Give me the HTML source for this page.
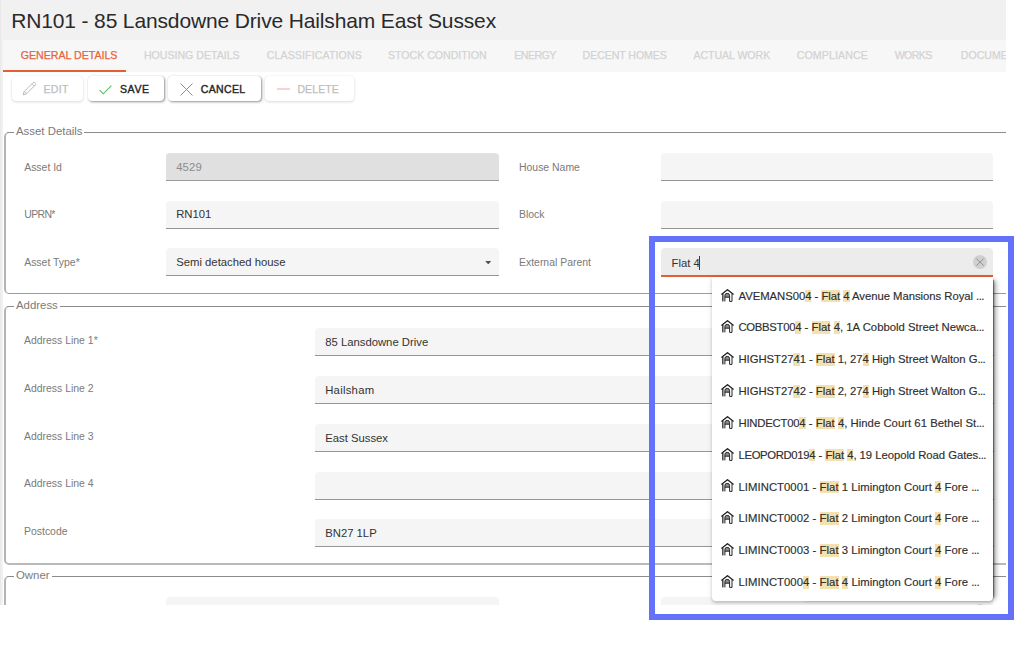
<!DOCTYPE html>
<html lang="en">
<head>
<meta charset="utf-8">
<title>RN101 - 85 Lansdowne Drive Hailsham East Sussex</title>
<style>
*{box-sizing:border-box;margin:0;padding:0}
html,body{width:1033px;height:645px;background:#fff;overflow:hidden}
body{font-family:"Liberation Sans",sans-serif;font-size:11.3px;color:#333;position:relative}
.abs,#page *{position:absolute;white-space:nowrap}
#page{position:absolute;left:0;top:0;width:1005.5px;height:605px;overflow:hidden;background:#f1f1f1}
#edge{left:0;top:0;width:1px;height:605px;background:#e9e9e9}
#title{left:11.2px;top:7.6px;font-size:21px;letter-spacing:-.14px;line-height:26px;color:#2a2a2a}
#tabbar{left:3px;top:40px;width:1010px;height:32px;background:#f7f7f7}
#tabbar span{top:0;line-height:30px;font-size:10.6px;letter-spacing:0;color:#d3d3d3;font-weight:400;-webkit-text-stroke:.25px}
#tabbar span.on{color:#e8633b}
#slider{left:0;top:30px;width:122.8px;height:2px;background:#e55e31}
#content{left:3px;top:72px;width:1010px;height:540px;background:#fff}
.btn{top:76px;height:25px;background:#fff;border-radius:4px;box-shadow:1px 1px 2.5px rgba(0,0,0,.42),0 0 1px rgba(0,0,0,.18)}
.btn.dis{box-shadow:0 1px 3px rgba(0,0,0,.14),0 0 1px rgba(0,0,0,.10)}
.btn b{top:.6px;line-height:25px;font-size:10.5px;letter-spacing:.7px;font-weight:400;-webkit-text-stroke:.4px;color:#262626}
.btn.dis b{color:#bebebe;-webkit-text-stroke:.25px}
.btn svg{overflow:visible}
.fs{left:4px;width:1100px;border-style:solid;border-width:1px 0 2px 2px;border-color:#8c8c8c #b4b4b4 #bababa #b4b4b4;border-radius:5px}
.fs i{font-style:normal;top:-8px;left:8px;padding:0 2px;background:#fff;line-height:13px;font-size:11.4px;color:#7b7b7b}
.lb{color:#7a7a7a;font-size:10.45px;line-height:14px}
.in{height:28px;background:#f5f5f5;border-bottom:1px solid #969696;border-radius:4px 4px 0 0}
.in.dis{background:#e0e0e0;border-bottom-color:#9a9a9a}
.in.dis u{color:#8b8b8b}
.in.foc{background:#ececec;border-bottom:2px solid #e55e31}
.in u{text-decoration:none;left:10.2px;top:6.8px;line-height:14px;font-size:11.3px;color:#333}
#dd{position:absolute;left:712px;top:277px;width:281px;height:324px;background:#fff;border-radius:0 0 4px 4px;box-shadow:0 2px 3px rgba(0,0,0,.17),0 1px 6px rgba(0,0,0,.10)}
#ddsh{position:absolute;left:800px;top:280px;width:193px;height:320px;border-radius:0 0 5px 0;box-shadow:1.5px 0 1.5px -.5px rgba(0,0,0,.5),4px 0 5px -1px rgba(0,0,0,.32)}
#dd div{position:absolute;left:0;width:281.5px;height:32px;white-space:nowrap}
#dd svg{position:absolute;left:9px;top:9.5px}
#dd p{position:absolute;left:26.5px;top:10.6px;line-height:13px;font-size:11.3px;color:#2e2e2e;-webkit-text-stroke:.15px;white-space:nowrap}
#dd s{text-decoration:none;letter-spacing:-.55px}
#dd em{font-style:normal;background:#f4e1b1;padding:0 0 .5px}
#hl{position:absolute;left:649px;top:236px;width:365px;height:384px;border:6px solid #6472f9}
</style>
</head>
<body>
<div id="page">
  <div id="edge"></div>
  <div id="title">RN101 - 85 Lansdowne Drive Hailsham East Sussex</div>
  <div id="tabbar">
    <span class="on" id="t0" style="left:17.8px">GENERAL DETAILS</span>
    <span id="t1" style="left:140.9px">HOUSING DETAILS</span>
    <span id="t2" style="left:263.7px;letter-spacing:0.12px">CLASSIFICATIONS</span>
    <span id="t3" style="left:384.9px">STOCK CONDITION</span>
    <span id="t4" style="left:511.2px;letter-spacing:-0.5px">ENERGY</span>
    <span id="t5" style="left:579.6px;letter-spacing:-0.08px">DECENT HOMES</span>
    <span id="t6" style="left:690.5px;letter-spacing:-0.06px">ACTUAL WORK</span>
    <span id="t7" style="left:793.7px;letter-spacing:0.13px">COMPLIANCE</span>
    <span id="t8" style="left:891.7px;letter-spacing:-0.58px">WORKS</span>
    <span id="t9" style="left:957.8px">DOCUMENTS</span>
    <div id="slider"></div>
  </div>
  <div id="content"></div>

  <!-- buttons -->
  <div class="btn dis" style="left:12px;width:71px">
    <svg style="left:10px;top:5px" width="15" height="15" viewBox="0 0 15 15"><path d="M1.2 13.8l.9-3.2L11.1 1.6a1.1 1.1 0 0 1 1.5 0l.8.8a1.1 1.1 0 0 1 0 1.5L4.4 12.9z M2.2 10.4l2.4 2.4M10 2.8l2.3 2.3" fill="none" stroke="#b2b2b2" stroke-width=".9"/></svg>
    <b id="b0" style="left:31.5px;letter-spacing:.3px">EDIT</b>
  </div>
  <div class="btn" style="left:88px;width:76px">
    <svg style="left:11px;top:8.5px" width="13" height="10" viewBox="0 0 13 10"><path d="M.6 5.2l3.6 3.6L12.4.7" fill="none" stroke="#5cb860" stroke-width="1.05"/></svg>
    <b id="b1" style="left:31.9px;letter-spacing:.65px">SAVE</b>
  </div>
  <div class="btn" style="left:168px;width:93px">
    <svg style="left:11.8px;top:6.5px" width="13" height="13" viewBox="0 0 13 13"><path d="M.5.5l12 12M12.5.5l-12 12" fill="none" stroke="#e36a6a" stroke-width="1"/></svg>
    <b id="b2" style="left:32.7px;letter-spacing:.36px">CANCEL</b>
  </div>
  <div class="btn dis" style="left:265px;width:89px">
    <svg style="left:11.7px;top:11.5px" width="13" height="2" viewBox="0 0 13 2"><path d="M0 1h13" fill="none" stroke="#f3b4b4" stroke-width="1.2"/></svg>
    <b id="b3" style="left:32.4px;letter-spacing:.12px">DELETE</b>
  </div>

  <!-- Asset Details -->
  <div class="fs" style="top:132px;height:162px;border-bottom:1px solid #9c9c9c"><i id="lg0">Asset Details</i></div>
  <span class="lb" id="l0" style="left:24.2px;top:161px">Asset Id</span>
  <span class="lb" id="l1" style="left:24.2px;top:208.1px;letter-spacing:-0.6px">UPRN*</span>
  <span class="lb" id="l2" style="left:24.2px;top:255.6px">Asset Type*</span>
  <div class="in dis" style="left:166px;top:153px;width:332.8px"><u id="v0" style="letter-spacing:.12px">4529</u></div>
  <div class="in" style="left:166px;top:200.7px;width:332.8px"><u id="v1">RN101</u></div>
  <div class="in" style="left:166px;top:248.4px;width:332.8px"><u id="v2">Semi detached house</u>
    <svg style="left:319.3px;top:12.7px" width="6.4" height="3.4" viewBox="0 0 7 4"><path d="M0 0h7L3.5 4z" fill="#505050"/></svg>
  </div>
  <span class="lb" id="l3" style="left:519px;top:161px">House Name</span>
  <span class="lb" id="l4" style="left:519px;top:208.1px">Block</span>
  <span class="lb" id="l5" style="left:519px;top:255.6px">External Parent</span>
  <div class="in" style="left:661.3px;top:153px;width:332.2px"></div>
  <div class="in" style="left:661.3px;top:200.7px;width:332.2px"></div>
  <div class="in foc" style="left:661.3px;top:248px;width:332.2px;height:29px"><u id="v3" style="top:7.8px">Flat 4</u>
    <div style="left:37.4px;top:8px;width:1px;height:13.5px;background:#3c3c3c"></div>
    <svg style="left:311.7px;top:7.2px" width="14" height="14" viewBox="0 0 14 14"><circle cx="7" cy="7" r="7" fill="#cfcfcf"/><path d="M3.4 3.6l7.4 7M10.8 3.6l-7.4 7" stroke="#8a8a8a" stroke-width=".85" fill="none"/></svg>
  </div>

  <!-- Address -->
  <div class="fs" style="top:306px;height:259px"><i id="lg1">Address</i></div>
  <span class="lb" id="l6" style="left:24px;top:334.1px">Address Line 1*</span>
  <span class="lb" id="l7" style="left:24px;top:381.9px">Address Line 2</span>
  <span class="lb" id="l8" style="left:24px;top:429.6px">Address Line 3</span>
  <span class="lb" id="l9" style="left:24px;top:477.4px">Address Line 4</span>
  <span class="lb" id="l10" style="left:24px;top:525.2px">Postcode</span>
  <div class="in" style="left:315px;top:328.2px;width:678.5px"><u id="v4">85 Lansdowne Drive</u></div>
  <div class="in" style="left:315px;top:376px;width:678.5px"><u id="v5" style="letter-spacing:0.26px">Hailsham</u></div>
  <div class="in" style="left:315px;top:423.8px;width:678.5px"><u id="v6">East Sussex</u></div>
  <div class="in" style="left:315px;top:471.5px;width:678.5px"></div>
  <div class="in" style="left:315px;top:519.3px;width:678.5px"><u id="v7">BN27 1LP</u></div>

  <!-- Owner -->
  <div class="fs" style="top:576px;height:120px"><i id="lg2">Owner</i></div>
  <div class="in" style="left:166px;top:597.3px;width:332.8px"></div>
  <div class="in" style="left:661.3px;top:597.3px;width:332.2px">
    <svg style="left:311.7px;top:7.2px" width="14" height="14" viewBox="0 0 14 14"><circle cx="7" cy="7" r="7" fill="#d6d6d6"/><path d="M3.4 3.6l7.4 7M10.8 3.6l-7.4 7" stroke="#909090" stroke-width=".9" fill="none"/></svg>
  </div>
</div>

<!-- autocomplete dropdown -->
<div id="ddsh"></div>
<div id="dd">
  <div style="top:2.00px"><svg width="13" height="13" viewBox="0 0 13 13"><path d="M3.9 6.7a2.35 2.35 0 0 1 4.7 0v1.5h-4.7z" fill="#8a8a8a"/><path d="M2.7 5v7.4" fill="none" stroke="#909090" stroke-width=".9"/><path d="M1.7 4.8v7.6M3.9 12.4V6.7a2.35 2.35 0 0 1 4.7 0v5.7h2.4V4.8M3.9 8.2h4.7" fill="none" stroke="#262626" stroke-width="1"/><path d="M.4 5.4L6.5.7l6.1 4.7" fill="none" stroke="#222" stroke-width="1.3"/></svg><p id="r0" style="letter-spacing:-.03px">AVEMANS00<em>4</em> - <em>Flat</em> <em>4</em> Avenue Mansions Royal <s>...</s></p></div>
  <div style="top:33.83px"><svg width="13" height="13" viewBox="0 0 13 13"><path d="M3.9 6.7a2.35 2.35 0 0 1 4.7 0v1.5h-4.7z" fill="#8a8a8a"/><path d="M2.7 5v7.4" fill="none" stroke="#909090" stroke-width=".9"/><path d="M1.7 4.8v7.6M3.9 12.4V6.7a2.35 2.35 0 0 1 4.7 0v5.7h2.4V4.8M3.9 8.2h4.7" fill="none" stroke="#262626" stroke-width="1"/><path d="M.4 5.4L6.5.7l6.1 4.7" fill="none" stroke="#222" stroke-width="1.3"/></svg><p id="r1" style="letter-spacing:.02px"><span style="letter-spacing:-.3px">COBBST00</span><em>4</em> - <em>Flat</em> <em>4</em>, 1A Cobbold Street Newca<s>...</s></p></div>
  <div style="top:65.66px"><svg width="13" height="13" viewBox="0 0 13 13"><path d="M3.9 6.7a2.35 2.35 0 0 1 4.7 0v1.5h-4.7z" fill="#8a8a8a"/><path d="M2.7 5v7.4" fill="none" stroke="#909090" stroke-width=".9"/><path d="M1.7 4.8v7.6M3.9 12.4V6.7a2.35 2.35 0 0 1 4.7 0v5.7h2.4V4.8M3.9 8.2h4.7" fill="none" stroke="#262626" stroke-width="1"/><path d="M.4 5.4L6.5.7l6.1 4.7" fill="none" stroke="#222" stroke-width="1.3"/></svg><p id="r2" style="letter-spacing:-.04px">HIGHST27<em>4</em>1 - <em>Flat</em> 1, 27<em>4</em> High Street Walton G<s>...</s></p></div>
  <div style="top:97.49px"><svg width="13" height="13" viewBox="0 0 13 13"><path d="M3.9 6.7a2.35 2.35 0 0 1 4.7 0v1.5h-4.7z" fill="#8a8a8a"/><path d="M2.7 5v7.4" fill="none" stroke="#909090" stroke-width=".9"/><path d="M1.7 4.8v7.6M3.9 12.4V6.7a2.35 2.35 0 0 1 4.7 0v5.7h2.4V4.8M3.9 8.2h4.7" fill="none" stroke="#262626" stroke-width="1"/><path d="M.4 5.4L6.5.7l6.1 4.7" fill="none" stroke="#222" stroke-width="1.3"/></svg><p id="r3" style="letter-spacing:-.04px">HIGHST27<em>4</em>2 - <em>Flat</em> 2, 27<em>4</em> High Street Walton G<s>...</s></p></div>
  <div style="top:129.32px"><svg width="13" height="13" viewBox="0 0 13 13"><path d="M3.9 6.7a2.35 2.35 0 0 1 4.7 0v1.5h-4.7z" fill="#8a8a8a"/><path d="M2.7 5v7.4" fill="none" stroke="#909090" stroke-width=".9"/><path d="M1.7 4.8v7.6M3.9 12.4V6.7a2.35 2.35 0 0 1 4.7 0v5.7h2.4V4.8M3.9 8.2h4.7" fill="none" stroke="#262626" stroke-width="1"/><path d="M.4 5.4L6.5.7l6.1 4.7" fill="none" stroke="#222" stroke-width="1.3"/></svg><p id="r4" style="letter-spacing:.03px"><span style="letter-spacing:-.22px">HINDECT00</span><em>4</em> - <em>Flat</em> <em>4</em>, Hinde Court 61 Bethel St<s>...</s></p></div>
  <div style="top:161.15px"><svg width="13" height="13" viewBox="0 0 13 13"><path d="M3.9 6.7a2.35 2.35 0 0 1 4.7 0v1.5h-4.7z" fill="#8a8a8a"/><path d="M2.7 5v7.4" fill="none" stroke="#909090" stroke-width=".9"/><path d="M1.7 4.8v7.6M3.9 12.4V6.7a2.35 2.35 0 0 1 4.7 0v5.7h2.4V4.8M3.9 8.2h4.7" fill="none" stroke="#262626" stroke-width="1"/><path d="M.4 5.4L6.5.7l6.1 4.7" fill="none" stroke="#222" stroke-width="1.3"/></svg><p id="r5" style="letter-spacing:-.04px"><span style="letter-spacing:-.34px">LEOPORD019</span><em>4</em> - <em>Flat</em> <em>4</em>, 19 Leopold Road Gates<s>...</s></p></div>
  <div style="top:192.98px"><svg width="13" height="13" viewBox="0 0 13 13"><path d="M3.9 6.7a2.35 2.35 0 0 1 4.7 0v1.5h-4.7z" fill="#8a8a8a"/><path d="M2.7 5v7.4" fill="none" stroke="#909090" stroke-width=".9"/><path d="M1.7 4.8v7.6M3.9 12.4V6.7a2.35 2.35 0 0 1 4.7 0v5.7h2.4V4.8M3.9 8.2h4.7" fill="none" stroke="#262626" stroke-width="1"/><path d="M.4 5.4L6.5.7l6.1 4.7" fill="none" stroke="#222" stroke-width="1.3"/></svg><p id="r6" style="letter-spacing:0.05px">LIMINCT0001 - <em>Flat</em> 1 Limington Court <em>4</em> Fore <s>...</s></p></div>
  <div style="top:224.81px"><svg width="13" height="13" viewBox="0 0 13 13"><path d="M3.9 6.7a2.35 2.35 0 0 1 4.7 0v1.5h-4.7z" fill="#8a8a8a"/><path d="M2.7 5v7.4" fill="none" stroke="#909090" stroke-width=".9"/><path d="M1.7 4.8v7.6M3.9 12.4V6.7a2.35 2.35 0 0 1 4.7 0v5.7h2.4V4.8M3.9 8.2h4.7" fill="none" stroke="#262626" stroke-width="1"/><path d="M.4 5.4L6.5.7l6.1 4.7" fill="none" stroke="#222" stroke-width="1.3"/></svg><p id="r7" style="letter-spacing:0.05px">LIMINCT0002 - <em>Flat</em> 2 Limington Court <em>4</em> Fore <s>...</s></p></div>
  <div style="top:256.64px"><svg width="13" height="13" viewBox="0 0 13 13"><path d="M3.9 6.7a2.35 2.35 0 0 1 4.7 0v1.5h-4.7z" fill="#8a8a8a"/><path d="M2.7 5v7.4" fill="none" stroke="#909090" stroke-width=".9"/><path d="M1.7 4.8v7.6M3.9 12.4V6.7a2.35 2.35 0 0 1 4.7 0v5.7h2.4V4.8M3.9 8.2h4.7" fill="none" stroke="#262626" stroke-width="1"/><path d="M.4 5.4L6.5.7l6.1 4.7" fill="none" stroke="#222" stroke-width="1.3"/></svg><p id="r8" style="letter-spacing:0.05px">LIMINCT0003 - <em>Flat</em> 3 Limington Court <em>4</em> Fore <s>...</s></p></div>
  <div style="top:288.47px"><svg width="13" height="13" viewBox="0 0 13 13"><path d="M3.9 6.7a2.35 2.35 0 0 1 4.7 0v1.5h-4.7z" fill="#8a8a8a"/><path d="M2.7 5v7.4" fill="none" stroke="#909090" stroke-width=".9"/><path d="M1.7 4.8v7.6M3.9 12.4V6.7a2.35 2.35 0 0 1 4.7 0v5.7h2.4V4.8M3.9 8.2h4.7" fill="none" stroke="#262626" stroke-width="1"/><path d="M.4 5.4L6.5.7l6.1 4.7" fill="none" stroke="#222" stroke-width="1.3"/></svg><p id="r9" style="letter-spacing:0.05px">LIMINCT000<em>4</em> - <em>Flat</em> <em>4</em> Limington Court <em>4</em> Fore <s>...</s></p></div>
</div>

<div id="hl"></div>
</body>
</html>
